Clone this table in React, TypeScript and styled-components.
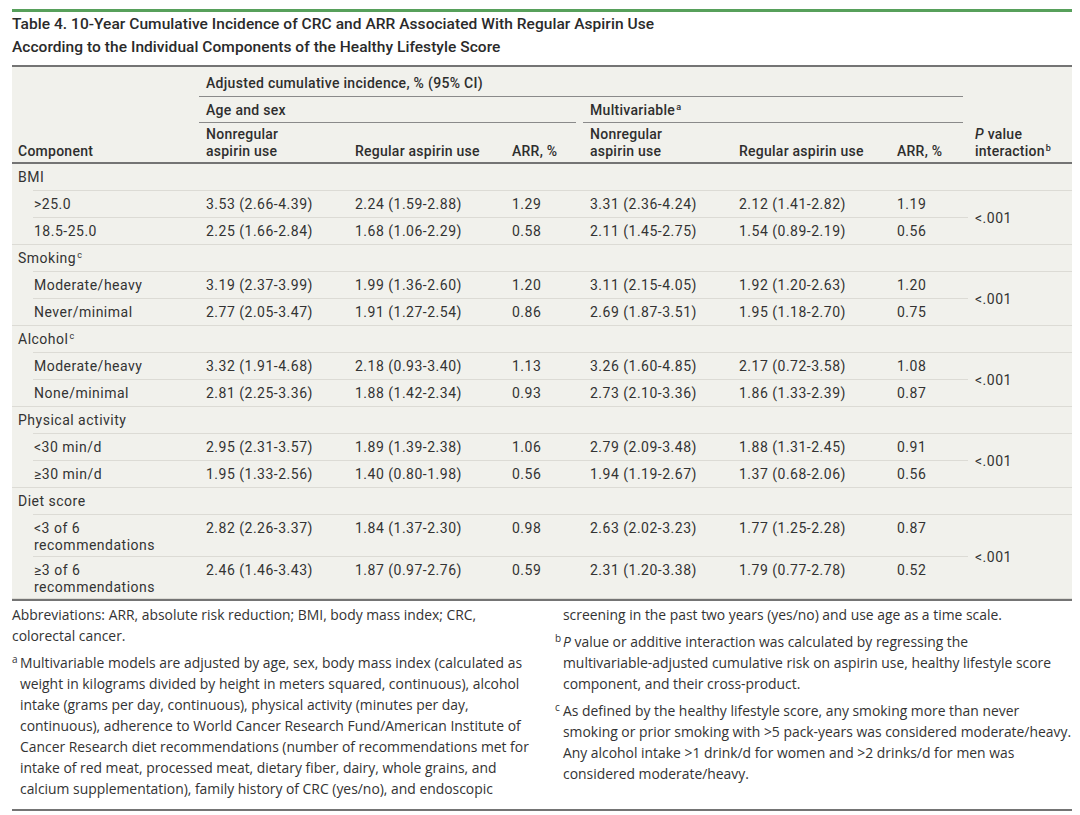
import styled, { createGlobalStyle } from "styled-components";

const GlobalStyle = createGlobalStyle`
  body {
    margin: 0;
    background: #ffffff;
  }
`;

type Rule = "none" | "full" | "indent";

const LINE = "#dcdbd5";
const DARK_RULE = "#747474";

// light row separators are painted as a 1px background strip so they don't change row heights
const ruleBg = (rule: Rule) => {
  if (rule === "none") return "none";
  const offset = rule === "indent" ? "21px" : "0px";
  const size = rule === "indent" ? "calc(100% - 21px)" : "100%";
  return `linear-gradient(${LINE}, ${LINE}) no-repeat ${offset} 100% / ${size} 1px`;
};

const Page = styled.div`
  width: 1060px;
  padding: 9px 8px 0 12px;
  font-family: Roboto, "Liberation Sans", sans-serif;
  color: #333333;
`;

const GreenRule = styled.div`
  height: 3px;
  background: #57a05b;
`;

const Title = styled.h1`
  margin: 0;
  padding: 1px 0 6px;
  font-size: 15.5px;
  font-weight: 500;
  line-height: 23px;
  letter-spacing: 0.05px;
  color: #2a2a2a;
  border-bottom: 2px solid ${DARK_RULE};
`;

const Table = styled.table`
  width: 100%;
  border-spacing: 0;
  border-collapse: separate;
  table-layout: fixed;
  background: #f1f1ec;
  border-bottom: 2px solid ${DARK_RULE};
  font-size: 14px;
  line-height: 17px;
  letter-spacing: 0.5px;
`;

const HeadCell = styled.th<{ $first?: boolean }>`
  padding: 3px 0 2px ${(p) => (p.$first ? "6px" : "7px")};
  text-align: left;
  vertical-align: bottom;
  font-weight: 500;
  letter-spacing: 0.25px;
  color: #2e2e2e;
  border-bottom: 2px solid ${DARK_RULE};
`;

const SpanCell = styled.th`
  padding: 0;
  text-align: left;
  vertical-align: bottom;
  font-weight: 500;
  letter-spacing: 0.3px;
  color: #2e2e2e;
`;

const SpanLabel = styled.div<{ $top: number; $bottom: number; $right: number }>`
  padding: ${(p) => p.$top}px 0 ${(p) => p.$bottom}px 7px;
  margin-right: ${(p) => p.$right}px;
  border-bottom: 1px solid #8a8a8a;
`;

const GroupCell = styled.td`
  padding: 5px 0 5px 6px;
  background: ${ruleBg("indent")};
`;

const LabelCell = styled.td<{ $rule: Rule; $tall?: boolean }>`
  padding: 5px 0 ${(p) => (p.$tall ? "3px" : "5px")} 22px;
  vertical-align: top;
  white-space: pre-line;
  background: ${(p) => ruleBg(p.$rule)};
`;

const ValueCell = styled.td<{ $rule: Rule }>`
  padding: 5px 0 5px 7px;
  vertical-align: top;
  background: ${(p) => ruleBg(p.$rule)};
`;

const PCell = styled.td`
  padding: 0 0 0 7px;
  vertical-align: middle;
  background: ${ruleBg("full")};
`;

const Sup = styled.sup`
  font-size: 9px;
  line-height: 0;
  vertical-align: 5px;
  margin-left: 1px;
`;

const Notes = styled.div`
  display: grid;
  grid-template-columns: 523px 1fr;
  column-gap: 20px;
  padding: 3px 0 10px;
  border-bottom: 2px solid ${DARK_RULE};
  font-family: "Open Sans", Lato, "Liberation Sans", sans-serif;
  font-size: 13.9px;
  line-height: 21px;
  white-space: nowrap;
  color: #333333;
`;

const NoteColumn = styled.div`
  display: flex;
  flex-direction: column;
  gap: 6px;
`;

const Note = styled.p<{ $kind: "plain" | "hang" | "cont" }>`
  margin: 0;
  padding-left: ${(p) => (p.$kind === "plain" ? "0" : "8px")};
  text-indent: ${(p) => (p.$kind === "hang" ? "-8px" : "0")};
`;

const NoteMark = styled.span`
  display: inline-block;
  width: 8px;
  text-indent: 0;
  font-size: 10px;
  line-height: 0;
  vertical-align: 5px;
`;

interface DataRow {
  label: string;
  values: string[];
}

interface Group {
  name: string;
  sup?: string;
  p: string;
  rows: DataRow[];
}

const groups: Group[] = [
  {
    name: "BMI",
    p: "<.001",
    rows: [
      { label: ">25.0", values: ["3.53 (2.66-4.39)", "2.24 (1.59-2.88)", "1.29", "3.31 (2.36-4.24)", "2.12 (1.41-2.82)", "1.19"] },
      { label: "18.5-25.0", values: ["2.25 (1.66-2.84)", "1.68 (1.06-2.29)", "0.58", "2.11 (1.45-2.75)", "1.54 (0.89-2.19)", "0.56"] },
    ],
  },
  {
    name: "Smoking",
    sup: "c",
    p: "<.001",
    rows: [
      { label: "Moderate/heavy", values: ["3.19 (2.37-3.99)", "1.99 (1.36-2.60)", "1.20", "3.11 (2.15-4.05)", "1.92 (1.20-2.63)", "1.20"] },
      { label: "Never/minimal", values: ["2.77 (2.05-3.47)", "1.91 (1.27-2.54)", "0.86", "2.69 (1.87-3.51)", "1.95 (1.18-2.70)", "0.75"] },
    ],
  },
  {
    name: "Alcohol",
    sup: "c",
    p: "<.001",
    rows: [
      { label: "Moderate/heavy", values: ["3.32 (1.91-4.68)", "2.18 (0.93-3.40)", "1.13", "3.26 (1.60-4.85)", "2.17 (0.72-3.58)", "1.08"] },
      { label: "None/minimal", values: ["2.81 (2.25-3.36)", "1.88 (1.42-2.34)", "0.93", "2.73 (2.10-3.36)", "1.86 (1.33-2.39)", "0.87"] },
    ],
  },
  {
    name: "Physical activity",
    p: "<.001",
    rows: [
      { label: "<30 min/d", values: ["2.95 (2.31-3.57)", "1.89 (1.39-2.38)", "1.06", "2.79 (2.09-3.48)", "1.88 (1.31-2.45)", "0.91"] },
      { label: "≥30 min/d", values: ["1.95 (1.33-2.56)", "1.40 (0.80-1.98)", "0.56", "1.94 (1.19-2.67)", "1.37 (0.68-2.06)", "0.56"] },
    ],
  },
  {
    name: "Diet score",
    p: "<.001",
    rows: [
      { label: "<3 of 6\nrecommendations", values: ["2.82 (2.26-3.37)", "1.84 (1.37-2.30)", "0.98", "2.63 (2.02-3.23)", "1.77 (1.25-2.28)", "0.87"] },
      { label: "≥3 of 6\nrecommendations", values: ["2.46 (1.46-3.43)", "1.87 (0.97-2.76)", "0.59", "2.31 (1.20-3.38)", "1.79 (0.77-2.78)", "0.52"] },
    ],
  },
];

const colWidths = [187, 149, 157, 78, 149, 158, 78, 104];

export default function App() {
  return (
    <Page>
      <GlobalStyle />
      <GreenRule />
      <Title>
        Table 4. 10-Year Cumulative Incidence of CRC and ARR Associated With Regular Aspirin Use
        <br />
        According to the Individual Components of the Healthy Lifestyle Score
      </Title>

      <Table>
        <colgroup>
          {colWidths.map((w, i) => (
            <col key={i} style={{ width: w }} />
          ))}
        </colgroup>
        <thead>
          <tr>
            <HeadCell rowSpan={3} $first>
              Component
            </HeadCell>
            <SpanCell colSpan={6}>
              <SpanLabel $top={8} $bottom={4} $right={5}>
                Adjusted cumulative incidence, % (95% CI)
              </SpanLabel>
            </SpanCell>
            <HeadCell rowSpan={3}>
              <i>P</i> value
              <br />
              interaction<Sup>b</Sup>
            </HeadCell>
          </tr>
          <tr>
            <SpanCell colSpan={3}>
              <SpanLabel $top={5} $bottom={3} $right={7}>
                Age and sex
              </SpanLabel>
            </SpanCell>
            <SpanCell colSpan={3}>
              <SpanLabel $top={5} $bottom={3} $right={5}>
                Multivariable<Sup>a</Sup>
              </SpanLabel>
            </SpanCell>
          </tr>
          <tr>
            <HeadCell>
              Nonregular
              <br />
              aspirin use
            </HeadCell>
            <HeadCell>Regular aspirin use</HeadCell>
            <HeadCell>ARR, %</HeadCell>
            <HeadCell>
              Nonregular
              <br />
              aspirin use
            </HeadCell>
            <HeadCell>Regular aspirin use</HeadCell>
            <HeadCell>ARR, %</HeadCell>
          </tr>
        </thead>
        <tbody>
          {groups.map((g) => [
            <tr key={g.name}>
              <GroupCell colSpan={8}>
                {g.name}
                {g.sup && <Sup>{g.sup}</Sup>}
              </GroupCell>
            </tr>,
            ...g.rows.map((r, i) => {
              const last = i === g.rows.length - 1;
              const tall = r.label.includes("\n");
              return (
                <tr key={g.name + r.label}>
                  <LabelCell $rule={last ? "full" : "indent"} $tall={tall}>
                    {r.label}
                  </LabelCell>
                  {r.values.map((v, j) => (
                    <ValueCell key={j} $rule="full">
                      {v}
                    </ValueCell>
                  ))}
                  {i === 0 && <PCell rowSpan={g.rows.length}>{g.p}</PCell>}
                </tr>
              );
            }),
          ])}
        </tbody>
      </Table>

      <Notes>
        <NoteColumn>
          <Note $kind="plain">
            Abbreviations: ARR, absolute risk reduction; BMI, body mass index; CRC,
            <br />
            colorectal cancer.
          </Note>
          <Note $kind="hang">
            <NoteMark>a</NoteMark>Multivariable models are adjusted by age, sex, body mass index (calculated as
            <br />
            weight in kilograms divided by height in meters squared, continuous), alcohol
            <br />
            intake (grams per day, continuous), physical activity (minutes per day,
            <br />
            continuous), adherence to World Cancer Research Fund/American Institute of
            <br />
            Cancer Research diet recommendations (number of recommendations met for
            <br />
            intake of red meat, processed meat, dietary fiber, dairy, whole grains, and
            <br />
            calcium supplementation), family history of CRC (yes/no), and endoscopic
          </Note>
        </NoteColumn>
        <NoteColumn>
          <Note $kind="cont">screening in the past two years (yes/no) and use age as a time scale.</Note>
          <Note $kind="hang">
            <NoteMark>b</NoteMark>
            <i>P</i> value or additive interaction was calculated by regressing the
            <br />
            multivariable-adjusted cumulative risk on aspirin use, healthy lifestyle score
            <br />
            component, and their cross-product.
          </Note>
          <Note $kind="hang">
            <NoteMark>c</NoteMark>As defined by the healthy lifestyle score, any smoking more than never
            <br />
            smoking or prior smoking with &gt;5 pack-years was considered moderate/heavy.
            <br />
            Any alcohol intake &gt;1 drink/d for women and &gt;2 drinks/d for men was
            <br />
            considered moderate/heavy.
          </Note>
        </NoteColumn>
      </Notes>
    </Page>
  );
}
